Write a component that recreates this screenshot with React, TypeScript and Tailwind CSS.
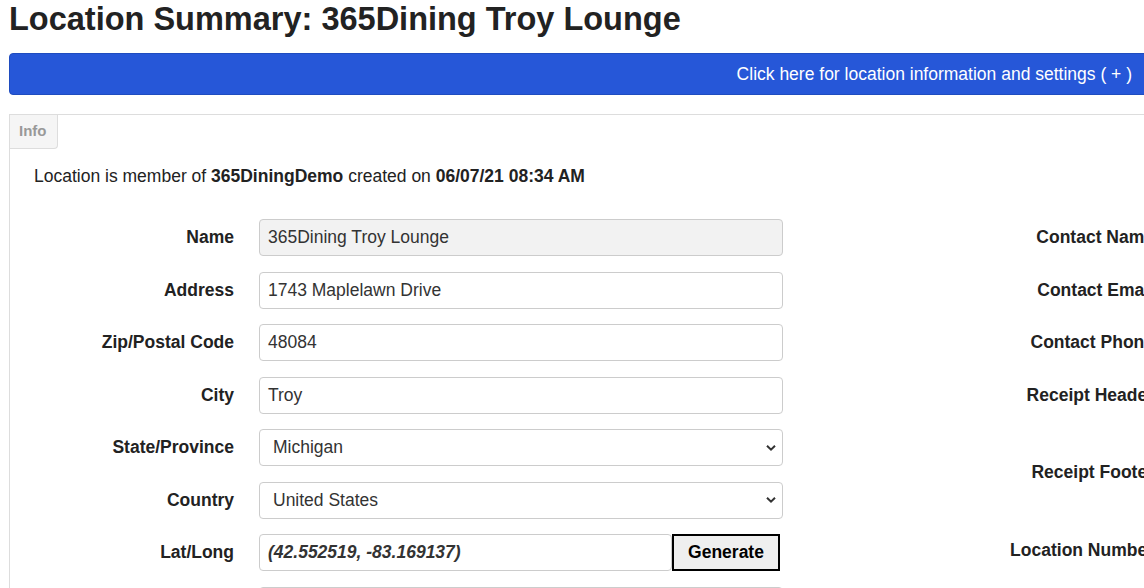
import { ReactNode } from "react";

const font = { fontFamily: '"Liberation Sans", Arial, sans-serif' };

function Label({ children }: { children?: ReactNode }) {
  return (
    <div className="w-[224px] shrink-0 text-right font-bold leading-[37px] text-[#222]">
      {children}
    </div>
  );
}

function TextInput({ value, disabled }: { value: string; disabled?: boolean }) {
  return (
    <div
      className={
        "flex h-[37px] w-[524px] items-center rounded-[4px] border border-[#ccc] pl-[8px] text-[#333] " +
        (disabled ? "bg-[#f2f2f2]" : "bg-white")
      }
    >
      {value}
    </div>
  );
}

function SelectInput({ value }: { value: string }) {
  return (
    <div className="relative flex h-[37px] w-[524px] items-center rounded-[4px] border border-[#ccc] bg-white pl-[13px] text-[#333]">
      {value}
      <svg
        className="absolute right-[6px] top-1/2 -translate-y-1/2"
        width="10"
        height="7"
        viewBox="0 0 10 7"
        fill="none"
      >
        <path d="M1 1.2 L5 5.2 L9 1.2" stroke="#333" strokeWidth="2" />
      </svg>
    </div>
  );
}

export default function App() {
  return (
    <div className="h-[588px] w-[1144px] overflow-hidden bg-white text-[17.5px]" style={font}>
      <div className="w-[1400px] pl-[9px] pt-[1px]">
        <h1 className="text-[32.5px] font-bold leading-[36px] text-[#222]">
          Location Summary: 365Dining Troy Lounge
        </h1>

        {/* barra de ajustes */}
        <div className="mt-[16px] flex h-[42px] w-[1140px] items-center justify-end rounded-[4px] border border-[#1f4cbf] bg-[#2657d8] pr-[16px] text-white">
          Click here for location information and settings ( + )
        </div>

        <div className="mt-[19px] w-[1300px] border-l border-t border-[#ddd]">
          <div className="flex h-[34px] w-[48px] items-center rounded-br-[4px] border-b border-r border-[#ddd] bg-[#f5f5f5] pl-[9px] text-[15px] font-bold text-[#999]">
            Info
          </div>

          <div className="mt-[15px] pl-[24px] leading-[24px] text-[#222]">
            Location is member of <b>365DiningDemo</b> created on <b>06/07/21 08:34 AM</b>
          </div>

          <div className="mt-[31px] flex">
            {/* columna izquierda */}
            <div className="flex w-[920px] shrink-0 flex-col gap-[15.5px]">
              <div className="flex gap-[25px]">
                <Label>Name</Label>
                <TextInput value="365Dining Troy Lounge" disabled />
              </div>
              <div className="flex gap-[25px]">
                <Label>Address</Label>
                <TextInput value="1743 Maplelawn Drive" />
              </div>
              <div className="flex gap-[25px]">
                <Label>Zip/Postal Code</Label>
                <TextInput value="48084" />
              </div>
              <div className="flex gap-[25px]">
                <Label>City</Label>
                <TextInput value="Troy" />
              </div>
              <div className="flex gap-[25px]">
                <Label>State/Province</Label>
                <SelectInput value="Michigan" />
              </div>
              <div className="flex gap-[25px]">
                <Label>Country</Label>
                <SelectInput value="United States" />
              </div>
              <div className="flex gap-[25px]">
                <Label>Lat/Long</Label>
                <div className="flex w-[524px]">
                  <div className="flex h-[37px] w-[413px] items-center rounded-[4px] border border-[#ccc] bg-white pl-[8px] font-bold italic text-[#333]">
                    (42.552519, -83.169137)
                  </div>
                  <button className="h-[37px] w-[108px] border-2 border-black bg-[#efefef] font-bold text-black">
                    Generate
                  </button>
                </div>
              </div>
              <div className="flex gap-[25px]">
                <Label />
                <TextInput value="" />
              </div>
            </div>

            {/* columna derecha */}
            <div className="flex flex-col gap-[15.5px]">
              <div className="flex h-[37px]">
                <Label>Contact Name</Label>
              </div>
              <div className="flex h-[37px]">
                <Label>Contact Email</Label>
              </div>
              <div className="flex h-[37px]">
                <Label>Contact Phone</Label>
              </div>
              <div className="flex h-[62px]">
                <Label>Receipt Header</Label>
              </div>
              <div className="flex h-[62px]">
                <Label>Receipt Footer</Label>
              </div>
              <div className="flex h-[37px]">
                <Label>Location Number</Label>
              </div>
            </div>
          </div>
        </div>
      </div>
    </div>
  );
}
